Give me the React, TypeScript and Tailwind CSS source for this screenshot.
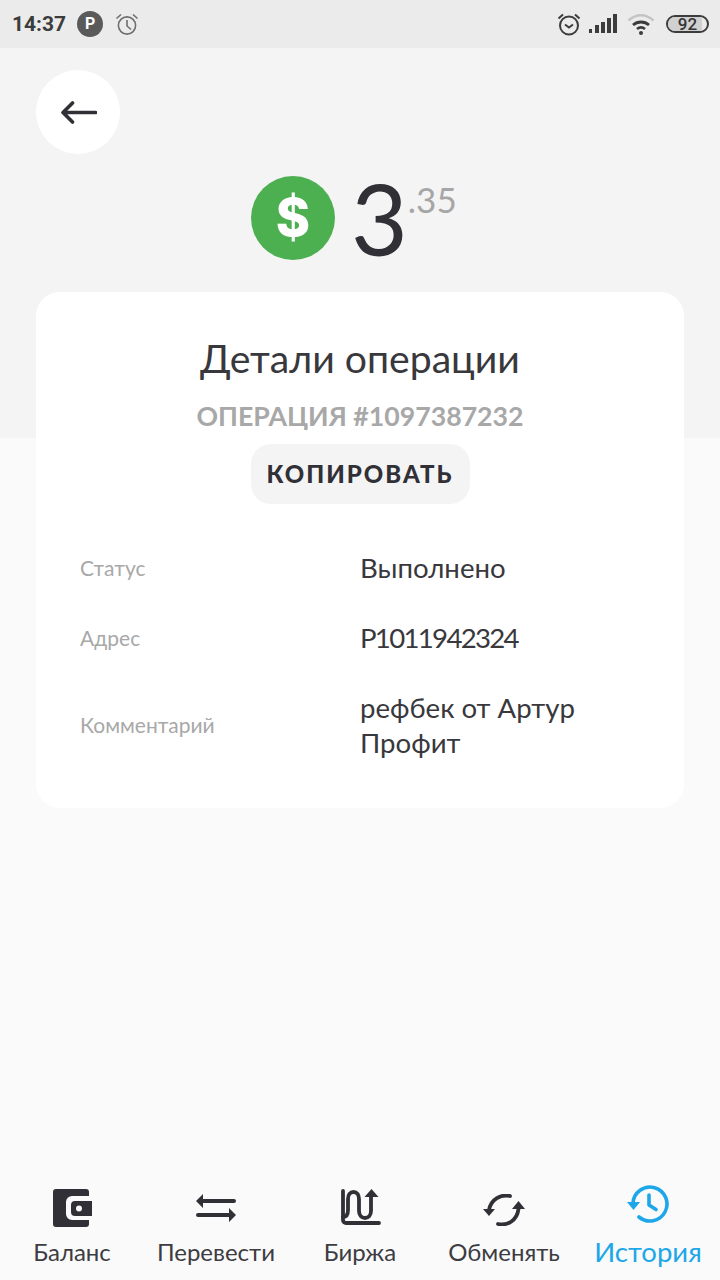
import React from "react";

const ink = "#303036";

function StatusBar() {
  return (
    <div className="flex h-12 items-center justify-between bg-[#ebebeb] pl-[12px] pr-[11px]">
      <div className="flex items-center">
        <span className="text-[21px] font-bold leading-none text-[#3c3c3c] [font-family:Roboto,sans-serif]">14:37</span>
        <span className="ml-[11px] flex h-[26px] w-[26px] items-center justify-center rounded-full bg-[#5a5a5a] text-[16px] font-bold text-white [font-family:Roboto,sans-serif]">P</span>
        <svg className="ml-[11px]" width="26" height="26" viewBox="0 0 26 26" fill="none" stroke="#6e6e6e" strokeWidth="1.6">
          <circle cx="13" cy="14.5" r="8.6" />
          <path d="M13 9v6l4 3.5" />
          <path d="M2.5 7.5 7 3.5M23.5 7.5 19 3.5" />
        </svg>
      </div>
      <div className="flex items-center">
        <svg width="26" height="26" viewBox="0 0 26 26" fill="none" stroke="#3c3c3c" strokeWidth="2">
          <circle cx="13" cy="14.5" r="9" />
          <path d="M9 13.5l4 3 4-3" />
          <path d="M2.5 7.5 7 3.5M23.5 7.5 19 3.5" />
        </svg>
        <svg className="ml-[7px]" width="28" height="20" viewBox="0 0 28 20" fill="#3c3c3c">
          <rect x="0" y="15" width="3" height="4" />
          <rect x="6" y="11" width="4" height="8" />
          <rect x="12" y="8" width="4" height="11" />
          <rect x="18" y="4" width="4" height="15" />
          <rect x="24" y="0" width="4" height="19" />
        </svg>
        <svg className="ml-[10px]" width="28" height="24" viewBox="0 0 28 24" fill="none">
          <path d="M1.500 8.500C9 1.500 19 1.500 26.500 8.500" stroke="#c4c4c4" strokeWidth="2.500" />
          <path d="M6 13C10.500 9 17.500 9 22 13" stroke="#3c3c3c" strokeWidth="2.800" />
          <path d="M10 17C12.500 15 15.500 15 18 17" stroke="#3c3c3c" strokeWidth="2.800" />
          <circle cx="14" cy="21" r="2" fill="#3c3c3c" />
        </svg>
        <div className="relative ml-[11px] flex h-[18px] w-[43px] items-center justify-center overflow-hidden rounded-full border-2 border-[#3c3c3c]">
          <div className="absolute inset-y-0 left-0 w-[88%] bg-[#d0d0d0]" />
          <span className="relative text-[17px] font-medium leading-none text-[#333] [font-family:Roboto,sans-serif]">92</span>
        </div>
      </div>
    </div>
  );
}

function Row({ label, children }: { label: string; children: React.ReactNode }) {
  return (
    <div className="flex items-center">
      <div className="w-[280px] text-[21px] text-[#a8a8a8]">{label}</div>
      <div className="flex-1 text-[27.6px] leading-[35px] text-[#38383d]">{children}</div>
    </div>
  );
}

function NavItem({ label, active, children }: { label: string; active?: boolean; children: React.ReactNode }) {
  return (
    <div className={`flex flex-col items-center ${active ? "text-[#1ea7e8]" : "text-[#303036]"}`}>
      <div className="flex h-[42px] items-end justify-center">{children}</div>
      <div className={`mt-[11px] whitespace-nowrap leading-[30px] ${active ? "text-[27.500px]" : "text-[24px] text-[#3c3c42]"}`}>{label}</div>
    </div>
  );
}

export default function App() {
  return (
    <div className="flex h-[1280px] w-[720px] flex-col overflow-hidden bg-[#fafafa] [font-family:Lato,'Noto_Sans',sans-serif]">
      <StatusBar />
      <div className="h-[390px] bg-[#f4f4f4] pl-[36px] pt-[22px]">
        <div className="flex h-[84px] w-[84px] items-center justify-center rounded-full bg-white">
          <svg className="ml-[2px]" width="36" height="23" viewBox="0 0 36 23" fill="none" stroke={ink} strokeWidth="3.600" strokeLinecap="round" strokeLinejoin="round">
            <path d="M34.500 11.500H4M11.500 2 2 11.500 11.500 21" />
          </svg>
        </div>
        <div className="mt-[22px] flex h-[84px] items-center pl-[215px]">
          <div className="flex h-[84px] w-[84px] items-center justify-center rounded-full bg-[#4caf50]">
            <span className="text-[52px] font-extrabold leading-none text-white [font-family:Inter,sans-serif]">$</span>
          </div>
          <div className="ml-[16px] text-[98px] font-normal leading-none text-[#303036]">3</div>
          <div className="-mt-[38px] text-[35px] font-normal leading-none text-[#a6a6a6]">.35</div>
        </div>
      </div>
      <div className="relative mx-[36px] -mt-[146px] flex h-[516px] flex-col items-center rounded-[24px] bg-white pt-[43px]">
        <div className="text-[39.200px] leading-[46px] text-[#38383d]">Детали операции</div>
        <div className="mt-[17px] text-[26.700px] font-bold leading-[36px] text-[#a8a8a8]">ОПЕРАЦИЯ #1097387232</div>
        <div className="mt-[10px] flex h-[60px] w-[219px] items-center justify-center rounded-[20px] bg-[#f4f4f4] text-[24px] font-black tracking-[2px] text-[#303036]">КОПИРОВАТЬ</div>
        <div className="mt-[46px] flex w-full flex-col gap-[35px] pl-[44px]">
          <Row label="Статус">Выполнено</Row>
          <Row label="Адрес"><span className="tracking-[-1.7px]">P1011942324</span></Row>
          <Row label="Комментарий">рефбек от Артур<br />Профит</Row>
        </div>
      </div>
      <div className="flex-1" />
      <div className="grid h-[100px] grid-cols-5 pt-[4px]">
        <NavItem label="Баланс">
          <svg className="-mb-px" width="39" height="38" viewBox="0 0 39 38" fill="currentColor">
            <path d="M3 0h30a3 3 0 0 1 3 3v4H19a6 6 0 0 0-6 6v12a6 6 0 0 0 6 6h17v4a3 3 0 0 1-3 3H3a3 3 0 0 1-3-3V3a3 3 0 0 1 3-3z" />
            <path fillRule="evenodd" d="M22 12h17v15H22a4 4 0 0 1-4-4v-7a4 4 0 0 1 4-4zm4 4.500a3 3 0 1 0 0 6 3 3 0 0 0 0-6z" />
          </svg>
        </NavItem>
        <NavItem label="Перевести">
          <svg className="mb-[3px]" width="40" height="30" viewBox="0 0 40 30" fill="currentColor">
            <path d="M7 1v5h31a2 2 0 0 1 0 4H7v5L0 8z" />
            <path d="M33 15v5H2a2 2 0 0 0 0 4h31v5l7-7z" />
          </svg>
        </NavItem>
        <NavItem label="Биржа">
          <svg width="41" height="37" viewBox="0 0 41 37" fill="none" stroke="currentColor" strokeWidth="3.800" strokeLinecap="round" strokeLinejoin="round">
            <path d="M3 2v29a3 3 0 0 0 3 3h33" />
            <path d="M3 28c3.500 0 5-2 5-7V10c0-4 2-7 5.500-7S19 6 19 10v12c0 4 2.500 7 6 7s6-3 6-7V7" />
            <path d="M31.500 0l7 8h-14z" fill="currentColor" stroke="none" />
          </svg>
        </NavItem>
        <NavItem label="Обменять">
          <svg width="42" height="32" viewBox="0 0 42 32" fill="none" stroke="currentColor" strokeWidth="3.800" strokeLinecap="round">
            <path d="M27 2C18 0 8 5 6 16" />
            <path d="M15 30c9 2 19-3 20.500-15" />
            <path d="M0 15h12l-6 7z" fill="currentColor" stroke="none" />
            <path d="M29 15h13l-6.500-8z" fill="currentColor" stroke="none" />
          </svg>
        </NavItem>
        <NavItem label="История" active>
          <svg className="mb-[3px]" width="42" height="38" viewBox="0 0 42 38" fill="none" stroke="currentColor" strokeWidth="3.600" strokeLinecap="round" strokeLinejoin="round">
            <path d="M6 18A17 17 0 1 1 12 32" />
            <path d="M22 10v10l7 4.500" />
            <path d="M0 17h13l-6.500 8z" fill="currentColor" stroke="none" />
          </svg>
        </NavItem>
      </div>
    </div>
  );
}
